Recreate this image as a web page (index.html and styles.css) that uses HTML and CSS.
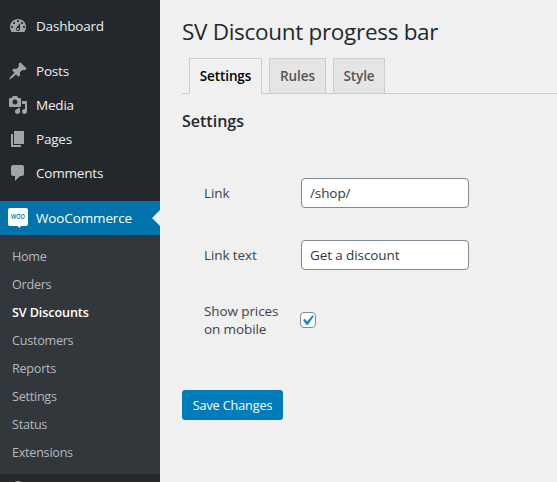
FILE: index.html
```html
<!DOCTYPE html>
<html lang="en">
<head>
<meta charset="utf-8">
<title>SV Discount progress bar</title>
<link rel="stylesheet" href="styles.css">
</head>
<body>
<nav class="sidebar">
  <a class="item gap"><svg class="icon" viewBox="0 0 20 20"><path d="M3.76 16h12.48c1.1-1.37 1.76-3.11 1.76-5 0-4.42-3.58-8-8-8s-8 3.58-8 8c0 1.89.66 3.63 1.76 5zM10 4c.55 0 1 .45 1 1s-.45 1-1 1-1-.45-1-1 .45-1 1-1zM6 6c.55 0 1 .45 1 1s-.45 1-1 1-1-.45-1-1 .45-1 1-1zm8 0c.55 0 1 .45 1 1s-.45 1-1 1-1-.45-1-1 .45-1 1-1zm-5.37 5.55L12 7v6c0 1.1-.9 2-2 2s-2-.9-2-2c0-.57.24-1.08.63-1.45zM4 10c.55 0 1 .45 1 1s-.45 1-1 1-1-.45-1-1 .45-1 1-1zm12 0c.55 0 1 .45 1 1s-.45 1-1 1-1-.45-1-1 .45-1 1-1zm-5 3c0-.55-.45-1-1-1s-1 .45-1 1 .45 1 1 1 1-.45 1-1z"/></svg>Dashboard</a>
  <a class="item"><svg class="icon" viewBox="0 0 20 20"><path d="M10.44 3.02l1.82-1.82 6.36 6.35-1.83 1.82c-1.05-.68-2.48-.57-3.41.36l-.75.75c-.92.93-1.04 2.35-.35 3.41l-1.83 1.82-2.41-2.41-2.8 2.79c-.42.42-3.38 2.71-3.8 2.29s1.86-3.39 2.28-3.81l2.79-2.79L4.1 9.36l1.83-1.82c1.05.69 2.48.57 3.4-.36l.75-.75c.93-.92 1.05-2.35.36-3.41z"/></svg>Posts</a>
  <a class="item"><svg class="icon" viewBox="0 0 20 20"><path d="M13 11V4c0-.55-.45-1-1-1h-1.67L9 1H5L3.67 3H2c-.55 0-1 .45-1 1v7c0 .55.45 1 1 1h10c.55 0 1-.45 1-1zM7 4.5c1.38 0 2.5 1.12 2.5 2.5S8.38 9.5 7 9.5 4.5 8.38 4.5 7 5.62 4.5 7 4.5zM14 6h5v10.5c0 1.38-1.12 2.5-2.5 2.5S14 17.88 14 16.5s1.12-2.5 2.5-2.5c.17 0 .34.02.5.05V9h-3V6zm-4 8.05V13h2v3.5c0 1.38-1.12 2.5-2.5 2.5S7 17.88 7 16.5 8.12 14 9.5 14c.17 0 .34.02.5.05z"/></svg>Media</a>
  <a class="item"><svg class="icon" viewBox="0 0 20 20"><path d="M6 15V2h10v13H6zm-1 1h8v2H3V5h2v11z"/></svg>Pages</a>
  <a class="item gap"><svg class="icon" viewBox="0 0 20 20"><path d="M5 2h9c1.1 0 2 .9 2 2v7c0 1.1-.9 2-2 2h-2l-5 5v-5H5c-1.1 0-2-.9-2-2V4c0-1.1.9-2 2-2z"/></svg>Comments</a>
  <a class="item current"><svg class="icon" viewBox="0 0 20 20"><path d="M2 0h16q2 0 2 2v14q0 2-2 2h-5.500l-.500 2-3-2H2q-2 0-2-2V2q0-2 2-2z"/><text class="woo" x="3" y="11.200" textLength="14" lengthAdjust="spacingAndGlyphs">WOO</text></svg>WooCommerce</a>
  <div class="submenu">
    <a>Home</a>
    <a>Orders</a>
    <a class="active">SV Discounts</a>
    <a>Customers</a>
    <a>Reports</a>
    <a>Settings</a>
    <a>Status</a>
    <a>Extensions</a>
  </div>
  <a class="item next"><svg class="icon" viewBox="0 0 20 20"><path d="M10 1a5 5 0 0 1 5 5v2h3v11H2V8h3V6a5 5 0 0 1 5-5z"/></svg></a>
</nav>
<main class="content">
  <h1>SV Discount progress bar</h1>
  <div class="tabs">
    <a class="tab selected">Settings</a>
    <a class="tab rules">Rules</a>
    <a class="tab style">Style</a>
  </div>
  <h2>Settings</h2>
  <form class="form">
    <label for="link">Link</label>
    <input id="link" class="text" type="text" value="/shop/">
    <label for="text">Link text</label>
    <input id="text" class="text" type="text" value="Get a discount">
    <label>Show prices<br>on mobile</label>
    <span class="check"><svg viewBox="0 0 20 20"><path d="M14.830 4.890l1.340.940-5.810 8.380H9.020L5.780 9.670l1.340-1.250 2.570 2.400z"/></svg></span>
  </form>
  <button class="save" type="button">Save Changes</button>
</main>
</body>
</html>
```
FILE: styles.css
```css
* { box-sizing: border-box; }
body {
  margin: 0;
  display: flex;
  height: 482px;
  overflow: hidden;
  background: #f0f0f0;
  color: #3c434a;
  font: 13.5px/18px "Open Sans", sans-serif;
}
.sidebar {
  flex: none;
  width: 160px;
  height: 482px;
  overflow: hidden;
  padding-top: 9px;
  background: #23282d;
}
.item {
  position: relative;
  display: flex;
  align-items: center;
  gap: 8px;
  height: 34px;
  padding-left: 8px;
  color: #eee;
  letter-spacing: -0.2px;
}
.item.gap { margin-bottom: 11px; }
.icon { width: 20px; height: 20px; fill: #a0a5aa; overflow: visible; }
.item.current { background: #0073aa; color: #fff; letter-spacing: -0.13px; }
.current .icon { fill: #fff; }
.current .woo { fill: #0073aa; font: 600 7px "Open Sans", sans-serif; letter-spacing: 0; }
.item.current::after {
  content: "";
  position: absolute;
  right: 0;
  top: 9px;
  border: 8px solid transparent;
  border-left: 0;
  border-right-color: #f0f0f0;
}
.item.next { height: 32px; }
.submenu {
  height: 239px;
  padding: 8px 12px 0;
  background: #32373c;
  color: #b4b9be;
  font-size: 12.6px;
  letter-spacing: -0.25px;
}
.submenu a { display: block; line-height: 28px; }
.submenu .active { color: #fff; font-weight: 600; letter-spacing: -0.1px; }
.content { flex: 1; padding: 17px 0 0 22px; }
h1 {
  margin: 0;
  color: #23282d;
  font-size: 22.5px;
  font-weight: 400;
  line-height: 30px;
  letter-spacing: -0.3px;
}
.tabs {
  display: flex;
  gap: 7px;
  height: 47px;
  padding: 11px 0 0 7px;
  border-bottom: 1px solid #ccc;
}
.tab {
  height: 36px;
  width: 57px;
  border: 1px solid #ccc;
  background: #e5e5e5;
  color: #555;
  font-weight: 600;
  line-height: 34px;
  text-align: center;
  letter-spacing: -0.1px;
}
.tab.style { width: 52px; }
.tab.selected { width: 73px; background: #f0f0f0; border-bottom-color: #f0f0f0; color: #000; }
h2 { margin: 17px 0 0; color: #23282d; font-size: 16px; font-weight: 600; line-height: 20px; }
.form {
  display: grid;
  grid-template-columns: 97px 168px;
  grid-template-rows: 62px 62px 68px;
  align-items: center;
  margin: 31px 0 0 22px;
  letter-spacing: -0.1px;
}
.text {
  width: 168px;
  height: 30px;
  padding: 0 8px;
  border: 1px solid #7e8993;
  border-radius: 4px;
  background: #fff;
  color: #32373c;
  font: inherit;
  letter-spacing: -0.1px;
}
.check {
  width: 16px;
  height: 16px;
  margin-left: -1px;
  border: 1px solid #7e8993;
  border-radius: 4px;
  background: #fff;
}
.check svg { display: block; width: 21px; height: 21px; margin: -3px 0 0 -4px; fill: #1e8cbe; }
.save {
  width: 101px;
  height: 30px;
  margin-top: 36px;
  padding: 0;
  border: 0;
  border-radius: 3px;
  background: #007cba;
  color: #fff;
  font: 12.6px "Open Sans", sans-serif;
  letter-spacing: -0.1px;
}
```
